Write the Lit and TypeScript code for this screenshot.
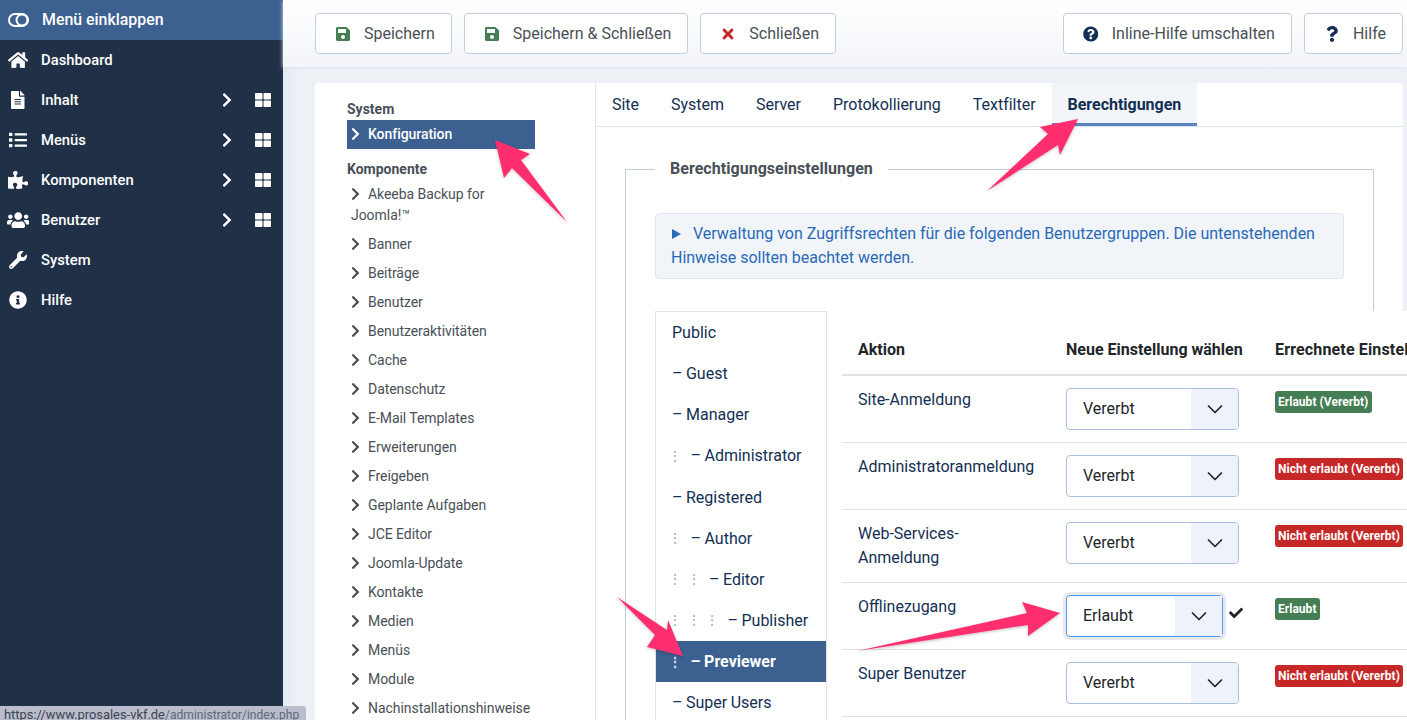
import { LitElement, html, css, svg } from "lit";
import { customElement } from "lit/decorators.js";

const P: Record<string, [number, string]> = {
  chevron: [320, "M285.476 272.971L91.132 467.314c-9.373 9.373-24.569 9.373-33.941 0l-22.667-22.667c-9.357-9.357-9.375-24.522-.04-33.901L188.505 256 34.484 101.255c-9.335-9.379-9.317-24.544.04-33.901l22.667-22.667c9.373-9.373 24.569-9.373 33.941 0L285.475 239.03c9.373 9.372 9.373 24.568.001 33.941z"],
  check: [512, "M173.898 439.404l-166.4-166.4c-9.997-9.997-9.997-26.206 0-36.204l36.203-36.204c9.997-9.998 26.207-9.998 36.204 0L192 312.69 432.095 72.596c9.997-9.997 26.207-9.997 36.204 0l36.203 36.204c9.997 9.997 9.997 26.206 0 36.204l-294.4 294.401c-9.998 9.997-26.207 9.997-36.204-.001z"],
  times: [352, "M242.72 256l100.07-100.07c12.28-12.28 12.28-32.19 0-44.48l-22.24-22.24c-12.28-12.28-32.19-12.28-44.48 0L176 189.28 75.93 89.21c-12.28-12.28-32.19-12.28-44.48 0L9.21 111.45c-12.28 12.28-12.28 32.19 0 44.48L109.28 256 9.21 356.07c-12.28 12.28-12.28 32.19 0 44.48l22.24 22.24c12.28 12.28 32.2 12.28 44.48 0L176 322.72l100.07 100.07c12.28 12.28 32.2 12.28 44.48 0l22.24-22.24c12.28-12.28 12.28-32.19 0-44.48L242.72 256z"],
  save: [448, "M433.941 129.941l-83.882-83.882A48 48 0 0 0 316.118 32H48C21.49 32 0 53.49 0 80v352c0 26.51 21.49 48 48 48h352c26.51 0 48-21.49 48-48V163.882a48 48 0 0 0-14.059-33.941zM224 416c-35.346 0-64-28.654-64-64 0-35.346 28.654-64 64-64s64 28.654 64 64c0 35.346-28.654 64-64 64zm96-304.52V212c0 6.627-5.373 12-12 12H76c-6.627 0-12-5.373-12-12V108c0-6.627 5.373-12 12-12h228.52c3.183 0 6.235 1.264 8.485 3.515l3.48 3.48A11.996 11.996 0 0 1 320 111.48z"],
  qcircle: [512, "M504 256c0 136.997-111.043 248-248 248S8 392.997 8 256C8 119.083 119.043 8 256 8s248 111.083 248 248zM262.655 90c-54.497 0-89.255 22.957-116.549 63.758-3.536 5.286-2.353 12.415 2.715 16.258l34.699 26.31c5.205 3.947 12.621 3.008 16.665-2.122 17.864-22.658 30.113-35.797 57.303-35.797 20.429 0 45.698 13.148 45.698 32.958 0 14.976-12.363 22.667-32.534 33.976C247.128 238.528 216 254.941 216 296v4c0 6.627 5.373 12 12 12h56c6.627 0 12-5.373 12-12v-1.333c0-28.462 83.186-29.647 83.186-106.667 0-58.002-60.165-102-116.531-102zM256 338c-25.365 0-46 20.635-46 46 0 25.364 20.635 46 46 46s46-20.636 46-46c0-25.365-20.635-46-46-46z"],
  question: [384, "M202.021 0C122.202 0 70.503 32.703 29.914 91.026c-7.363 10.58-5.093 25.086 5.178 32.874l43.138 32.709c10.373 7.865 25.132 6.026 33.253-4.148 25.049-31.381 43.63-49.449 82.757-49.449 30.764 0 68.816 19.799 68.816 49.631 0 22.552-18.617 34.134-48.993 51.164-35.423 19.86-82.299 44.576-82.299 106.405V320c0 13.255 10.745 24 24 24h72.471c13.255 0 24-10.745 24-24v-5.773c0-42.86 125.268-44.645 125.268-160.627C377.504 66.256 286.902 0 202.021 0zM192 373.459c-38.196 0-69.271 31.075-69.271 69.271 0 38.195 31.075 69.27 69.271 69.27s69.271-31.075 69.271-69.271-31.075-69.27-69.271-69.27z"],
  info: [512, "M256 8C119.043 8 8 119.083 8 256c0 136.997 111.043 248 248 248s248-111.003 248-248C504 119.083 392.957 8 256 8zm0 110c23.196 0 42 18.804 42 42s-18.804 42-42 42-42-18.804-42-42 18.804-42 42-42zm56 254c0 6.627-5.373 12-12 12h-88c-6.627 0-12-5.373-12-12v-24c0-6.627 5.373-12 12-12h12v-64h-12c-6.627 0-12-5.373-12-12v-24c0-6.627 5.373-12 12-12h64c6.627 0 12 5.373 12 12v100h12c6.627 0 12 5.373 12 12v24z"],
  wrench: [512, "M507.73 109.1c-2.24-9.03-13.54-12.09-20.12-5.51l-74.36 74.36-67.88-11.31-11.31-67.88 74.36-74.36c6.62-6.62 3.43-17.9-5.66-20.16-47.38-11.74-99.55.91-136.58 37.93-39.64 39.64-50.55 97.1-34.05 147.2L18.74 402.76c-24.99 24.99-24.99 65.51 0 90.5 24.99 24.99 65.51 24.99 90.5 0l213.21-213.21c50.12 16.71 107.47 5.68 147.37-34.22 37.07-37.07 49.7-89.32 37.91-136.73zM64 472c-13.25 0-24-10.75-24-24 0-13.26 10.75-24 24-24s24 10.74 24 24c0 13.25-10.75 24-24 24z"],
  list: [512, "M80 368H16a16 16 0 0 0-16 16v64a16 16 0 0 0 16 16h64a16 16 0 0 0 16-16v-64a16 16 0 0 0-16-16zm0-320H16A16 16 0 0 0 0 64v64a16 16 0 0 0 16 16h64a16 16 0 0 0 16-16V64a16 16 0 0 0-16-16zm0 160H16a16 16 0 0 0-16 16v64a16 16 0 0 0 16 16h64a16 16 0 0 0 16-16v-64a16 16 0 0 0-16-16zm416 176H176a16 16 0 0 0-16 16v32a16 16 0 0 0 16 16h320a16 16 0 0 0 16-16v-32a16 16 0 0 0-16-16zm0-320H176a16 16 0 0 0-16 16v32a16 16 0 0 0 16 16h320a16 16 0 0 0 16-16V80a16 16 0 0 0-16-16zm0 160H176a16 16 0 0 0-16 16v32a16 16 0 0 0 16 16h320a16 16 0 0 0 16-16v-32a16 16 0 0 0-16-16z"],
  grid: [512, "M296 32h192c13.255 0 24 10.745 24 24v160c0 13.255-10.745 24-24 24H296c-13.255 0-24-10.745-24-24V56c0-13.255 10.745-24 24-24zm-80 0H24C10.745 32 0 42.745 0 56v160c0 13.255 10.745 24 24 24h192c13.255 0 24-10.745 24-24V56c0-13.255-10.745-24-24-24zM0 296v160c0 13.255 10.745 24 24 24h192c13.255 0 24-10.745 24-24V296c0-13.255-10.745-24-24-24H24c-13.255 0-24 10.745-24 24zm296 184h192c13.255 0 24-10.745 24-24V296c0-13.255-10.745-24-24-24H296c-13.255 0-24 10.745-24 24v160c0 13.255 10.745 24 24 24z"],
  home: [576, "M280.37 148.26L96 300.11V464a16 16 0 0 0 16 16l112.06-.29a16 16 0 0 0 15.92-16V368a16 16 0 0 1 16-16h64a16 16 0 0 1 16 16v95.64a16 16 0 0 0 16 16.05L464 480a16 16 0 0 0 16-16V300L295.67 148.26a12.19 12.19 0 0 0-15.3 0zM571.6 251.47L488 182.56V44.05a12 12 0 0 0-12-12h-56a12 12 0 0 0-12 12v72.61L318.47 43a48 48 0 0 0-61 0L4.34 251.47a12 12 0 0 0-1.6 16.9l25.5 31A12 12 0 0 0 45.15 301l235.22-193.74a12.19 12.19 0 0 1 15.3 0L530.9 301a12 12 0 0 0 16.9-1.6l25.5-31a12 12 0 0 0-1.7-16.93z"],
  file: [384, "M224 136V0H24C10.7 0 0 10.7 0 24v464c0 13.3 10.7 24 24 24h336c13.3 0 24-10.7 24-24V160H248c-13.2 0-24-10.8-24-24zm64 236c0 6.6-5.4 12-12 12H108c-6.6 0-12-5.4-12-12v-8c0-6.6 5.4-12 12-12h168c6.6 0 12 5.4 12 12v8zm0-64c0 6.6-5.4 12-12 12H108c-6.6 0-12-5.4-12-12v-8c0-6.6 5.4-12 12-12h168c6.6 0 12 5.4 12 12v8zm0-72v8c0 6.6-5.4 12-12 12H108c-6.6 0-12-5.4-12-12v-8c0-6.6 5.4-12 12-12h168c6.6 0 12 5.4 12 12zm96-114.1v6.1H256V0h6.1c6.4 0 12.5 2.5 17 7l97.9 98c4.5 4.5 7 10.6 7 16.9z"],
  puzzle: [576, "M519.442 288.651c-41.519 0-59.5 31.593-82.058 31.593C377.409 320.244 432 144 432 144s-196.288 80-196.288-3.297c0-35.827 36.288-46.25 36.288-85.985C272 19.216 243.885 0 210.539 0c-34.654 0-66.366 18.891-66.366 56.346 0 41.364 31.711 59.277 31.711 81.75C175.885 207.719 0 166.758 0 166.758v333.237s178.635 41.047 178.635-28.662c0-22.473-40-40.107-40-81.471 0-37.456 29.25-56.346 63.577-56.346 33.673 0 61.788 19.216 61.788 54.717 0 39.735-36.288 50.158-36.288 85.985 0 60.803 129.675 25.73 181.23 25.73 0 0-34.725-120.101 25.827-120.101 35.962 0 46.423 36.152 86.308 36.152C556.712 416 576 387.99 576 354.443c0-34.199-18.962-65.792-56.558-65.792z"],
  users: [640, "M96 224c35.3 0 64-28.7 64-64s-28.7-64-64-64-64 28.7-64 64 28.7 64 64 64zm448 0c35.3 0 64-28.7 64-64s-28.7-64-64-64-64 28.7-64 64 28.7 64 64 64zm32 32h-64c-17.6 0-33.5 7.1-45.1 18.6 40.3 22.1 68.9 62 75.1 109.4h66c17.7 0 32-14.3 32-32v-32c0-35.3-28.7-64-64-64zm-256 0c61.9 0 112-50.1 112-112S381.9 32 320 32 208 82.1 208 144s50.1 112 112 112zm76.8 32h-8.3c-20.8 10-43.9 16-68.5 16s-47.6-6-68.5-16h-8.3C179.6 288 128 339.6 128 403.2V432c0 26.5 21.5 48 48 48h288c26.5 0 48-21.5 48-48v-28.8c0-63.6-51.6-115.2-115.2-115.2zm-223.7-13.4C161.5 263.1 145.6 256 128 256H64c-35.3 0-64 28.7-64 64v32c0 17.7 14.3 32 32 32h65.9c6.3-47.4 34.9-87.3 75.2-109.4z"],
};

const icon = (name: string, cls = "") => {
  const [w, d] = P[name];
  return html`<svg class="ic ${cls}" viewBox="0 0 ${w} 512" fill="currentColor"><path d=${d}></path></svg>`;
};

const NAV: [string, string, boolean][] = [
  ["Dashboard", "home", false],
  ["Inhalt", "file", true],
  ["Menüs", "list", true],
  ["Komponenten", "puzzle", true],
  ["Benutzer", "users", true],
  ["System", "wrench", false],
  ["Hilfe", "info", false],
];

const TREE = ["Banner", "Beiträge", "Benutzer", "Benutzeraktivitäten", "Cache", "Datenschutz", "E-Mail Templates", "Erweiterungen", "Freigeben", "Geplante Aufgaben", "JCE Editor", "Joomla-Update", "Kontakte", "Medien", "Menüs", "Module", "Nachinstallationshinweise"];

const TABS = ["Site", "System", "Server", "Protokollierung", "Textfilter", "Berechtigungen"];

const GROUPS: [string, number][] = [
  ["Public", -1], ["Guest", 0], ["Manager", 0], ["Administrator", 1], ["Registered", 0],
  ["Author", 1], ["Editor", 2], ["Publisher", 3], ["Previewer", 1], ["Super Users", 0],
];

const ROWS: [string, string, string, boolean][] = [
  ["Site-Anmeldung", "Vererbt", "Erlaubt (Vererbt)", true],
  ["Administratoranmeldung", "Vererbt", "Nicht erlaubt (Vererbt)", false],
  ["Web-Services-Anmeldung", "Vererbt", "Nicht erlaubt (Vererbt)", false],
  ["Offlinezugang", "Erlaubt", "Erlaubt", true],
  ["Super Benutzer", "Vererbt", "Nicht erlaubt (Vererbt)", false],
];

const ARROWS = [
  "495,140 530,154 521,160 567,222 512,168 504,178",
  "1078,119 1060,155 1058,145 987,191 1048,134 1040,127",
  "683,656 647,647 655,635 617,597 667,630 668,620",
  "1060,613 1028,636 1028,625 857,651 1027,613 1022,602",
];

@customElement("app-root")
export class AppRoot extends LitElement {
  static styles = css`
    :host { display: flex; width: 1407px; height: 720px; overflow: hidden; position: relative; font-family: Roboto, "Liberation Sans", sans-serif; background: #edf1f6; }
    * { box-sizing: border-box; }
    .ic { display: block; flex: none; height: 16px; }

    .side { width: 283px; flex: none; background: #203047; color: #fff; font-size: 14.8px; font-weight: 500; }
    .collapse { height: 40px; background: #3c6090; display: flex; align-items: center; padding-left: 8px; gap: 13px; font-size: 15.9px; }
    .collapse span { padding-bottom: 2px; }
    .nav { height: 40px; display: flex; align-items: center; }
    .nav .lead { width: 41px; display: flex; justify-content: center; padding-right: 5px; flex: none; }
    .nav .lead .ic { height: 18px; }
    .nav .lbl { flex: 1; }
    .nav .chev { height: 16px; margin-right: 23px; }
    .nav .gr { height: 16px; margin-right: 12px; }

    .main { flex: 1; min-width: 0; display: flex; flex-direction: column; box-shadow: inset 14px 0 14px -10px #dde5f2; }
    .bar { height: 67px; flex: none; display: flex; align-items: center; padding: 0 4px 0 32px; gap: 12px; background: linear-gradient(180deg, #fff, #f2f5f9); box-shadow: 0 1px 4px #dfe5ee; }
    .btn { height: 41px; display: flex; align-items: center; padding: 0 16px 0 20px; gap: 14px; background: #fff; border: 1px solid #c3cddd; border-radius: 4px; font-size: 16px; color: #495057; white-space: nowrap; }
    .btn .ic { width: 14px; }
    .btn.q { padding-left: 19px; gap: 13.5px; }
    .btn.q .ic { width: 15.5px; height: 16px; }
    .g { color: #457d54; } .r { color: #c52827; } .n { color: #132f53; }
    .spacer { flex: 1; }

    .content { flex: 1; min-height: 0; padding: 16px 4px 0 32px; display: flex; }
    .card { flex: 1; min-width: 0; background: #fff; border-radius: 4px 4px 0 0; display: flex; }

    .tree { width: 281px; flex: none; border-right: 1px solid #dfe3ee; padding: 15px 60px 0 32px; color: #495057; font-size: 14px; }
    .tree h4 { margin: 0; font-size: 14px; font-weight: 700; color: #495057; line-height: 22px; }
    .tree h4.k { margin-top: 9px; }
    .item { padding: 3.5px 0 4px 4px; line-height: 21.5px; letter-spacing: -.05px; }
    .item.two { margin-bottom: -.5px; }
    .item .ic { display: inline-block; height: 14px; vertical-align: -2px; margin-right: 8px; width: 9px; }
    .item.on { background: #3c6090; color: #fff; font-weight: 500; }

    .pane { flex: 1; min-width: 0; }
    .tabs { height: 44px; display: flex; border-bottom: 1px solid #dfe3ee; color: #132f53; font-size: 16px; letter-spacing: -.02px; }
    .tab { padding: 0 16px; line-height: 43px; height: 43px; }
    .tab.on { background: #f2f5f9; font-weight: 700; border-bottom: 3px solid #5a83c0; }

    .body { padding: 30px 29px 0 29px; }
    fieldset { margin: 0; padding: 0 0 0 29px; border: 1px solid #c3cddd; border-bottom: 0; min-width: 0; height: 600px; }
    legend { padding: 0 15px; font-size: 16px; font-weight: 700; color: #495057; line-height: 24px; letter-spacing: .04px; }
    .alert { width: 689px; height: 66px; margin-top: 32px; padding: 8px 15px; background: #f1f5f9; border: 1px solid #dfe6ee; border-radius: 4px; color: #2a69b8; font-size: 16px; line-height: 24px; letter-spacing: -.01px; }
    .alert i { display: inline-block; width: 0; height: 0; border-left: 9px solid #2a69b8; border-top: 5px solid transparent; border-bottom: 5px solid transparent; margin: 0 12px 0 1px; }

    .perm { display: flex; margin-top: 32px; align-items: flex-start; width: 760px; }
    .groups { width: 172px; flex: none; border: 1px solid #dfe3ee; border-bottom: 0; color: #132f53; font-size: 16px; background: #fff; }
    .grp { height: 41.13px; display: flex; align-items: center; padding-left: 16px; white-space: nowrap; word-spacing: -.5px; }
    .grp .dot { width: 18.5px; flex: none; color: #a5abb3; font-size: 14px; text-indent: -4px; }
    .grp.on { background: #3c6090; color: #fff; font-weight: 700; }
    .grp.on .dot { color: #d5dce6; }

    .tablewrap { margin-left: 15px; width: 620px; height: 420px; flex: none; background: #fff; }
    table { width: 620px; table-layout: fixed; border-collapse: separate; border-spacing: 0; font-size: 16px; line-height: 24px; color: #132f53; }
    th { height: 65px; vertical-align: bottom; text-align: left; padding: 0 16px 12px; color: #212529; font-weight: 700; border-bottom: 2px solid #dee2e6; white-space: nowrap; }
    th:nth-child(3) { letter-spacing: .15px; }
    td { vertical-align: top; padding: 12px 16px; border-bottom: 1px solid #dee2e6; }
    .pick { display: flex; align-items: center; gap: 6px; }
    .sel { width: 173px; height: 42px; display: flex; align-items: center; border: 1px solid #a9c0e0; border-radius: 4px; overflow: hidden; color: #212529; background: #fff; }
    .sel span { flex: 1; padding-left: 16px; }
    .sel b { width: 47px; height: 100%; background: #eef3fb; display: flex; align-items: center; justify-content: center; }
    .sel.focus { width: 157px; border-color: #4d9bf5; box-shadow: 0 0 0 3px #e9e9e9; overflow: visible; }
    .pick .tick { height: 14px; width: 14px; color: #212529; margin-top: -6px; }
    .badge { display: inline-block; margin-top: 3px; padding: 0 3.5px 0 3px; height: 22px; line-height: 22px; border-radius: 3px; color: #fff; font-size: 12px; font-weight: 700; white-space: nowrap; letter-spacing: .03px; }
    .badge.ok { background: #457d54; } .badge.no { background: #c52827; }

    .status { position: absolute; left: 0; bottom: 0; width: 306px; height: 14px; background: #b9bdcc; border-radius: 0 3px 0 0; font-size: 12.9px; line-height: 17px; padding-left: 4px; color: #3c4350; white-space: nowrap; overflow: hidden; }
    .status em { font-style: normal; font-size: 12.1px; color: #5f6778; }

    .arrows { position: absolute; left: 0; top: 0; width: 1407px; height: 720px; pointer-events: none; }
  `;

  render() {
    return html`
      <aside class="side">
        <div class="collapse">
          <svg width="21" height="14" viewBox="0 0 21 14" fill="none" stroke="#fff" stroke-width="2"><rect x="1" y="1" width="19" height="12" rx="6"></rect><circle cx="14" cy="7" r="5.5"></circle></svg>
          <span>Menü einklappen</span>
        </div>
        ${NAV.map(([t, i, sub]) => html`
          <div class="nav">
            <span class="lead">${icon(i)}</span>
            <span class="lbl">${t}</span>
            ${sub ? html`${icon("chevron", "chev")}${icon("grid", "gr")}` : ""}
          </div>`)}
      </aside>
      <div class="main">
        <div class="bar">
          <div class="btn">${icon("save", "g")}Speichern</div>
          <div class="btn">${icon("save", "g")}Speichern &amp; Schließen</div>
          <div class="btn">${icon("times", "r")}Schließen</div>
          <div class="spacer"></div>
          <div class="btn q">${icon("qcircle", "n")}Inline-Hilfe umschalten</div>
          <div class="btn">${icon("question", "n")}Hilfe</div>
        </div>
        <div class="content">
          <div class="card">
            <nav class="tree">
              <h4>System</h4>
              <div class="item on">${icon("chevron")}Konfiguration</div>
              <h4 class="k">Komponente</h4>
              <div class="item two">${icon("chevron")}Akeeba Backup for Joomla!™</div>
              ${TREE.map((t) => html`<div class="item">${icon("chevron")}${t}</div>`)}
            </nav>
            <section class="pane">
              <div class="tabs">
                ${TABS.map((t, i) => html`<div class="tab ${i === 5 ? "on" : ""}">${t}</div>`)}
              </div>
              <div class="body">
                <fieldset>
                  <legend>Berechtigungseinstellungen</legend>
                  <div class="alert"><i></i>Verwaltung von Zugriffsrechten für die folgenden Benutzergruppen. Die untenstehenden Hinweise sollten beachtet werden.</div>
                  <div class="perm">
                    <div class="groups">
                      ${GROUPS.map(([t, lvl]) => html`
                        <div class="grp ${t === "Previewer" ? "on" : ""}">
                          ${Array.from({ length: Math.max(lvl, 0) }, () => html`<span class="dot">⋮</span>`)}
                          <span>${lvl >= 0 ? "– " : ""}${t}</span>
                        </div>`)}
                    </div>
                    <div class="tablewrap">
                      <table>
                        <colgroup><col style="width:208px" /><col style="width:209px" /><col style="width:203px" /></colgroup>
                        <thead><tr><th>Aktion</th><th>Neue Einstellung wählen</th><th>Errechnete Einstellung</th></tr></thead>
                        <tbody>
                          ${ROWS.map(([a, v, b, ok]) => html`
                            <tr>
                              <td>${a}</td>
                              <td><div class="pick">
                                <div class="sel ${v === "Erlaubt" ? "focus" : ""}"><span>${v}</span><b><svg width="16" height="16" viewBox="0 0 16 16" fill="none" stroke="#212529" stroke-width="1.7" stroke-linecap="round" stroke-linejoin="round"><path d="M1.5 5l6.5 6.5L14.5 5"></path></svg></b></div>
                                ${v === "Erlaubt" ? icon("check", "tick") : ""}
                              </div></td>
                              <td><span class="badge ${ok ? "ok" : "no"}">${b}</span></td>
                            </tr>`)}
                        </tbody>
                      </table>
                    </div>
                  </div>
                </fieldset>
              </div>
            </section>
          </div>
        </div>
      </div>
      <svg class="arrows" viewBox="0 0 1407 720">
        <defs><filter id="sh" x="-20%" y="-20%" width="140%" height="140%"><feDropShadow dx="0" dy="1" stdDeviation="1.5" flood-color="#000" flood-opacity=".25"></feDropShadow></filter></defs>
        ${ARROWS.map((p) => svg`<polygon points=${p} fill="#ff2e6e" filter="url(#sh)"></polygon>`)}
      </svg>
      <div class="status">https://www.prosales-vkf.de<em>/administrator/index.php</em></div>
    `;
  }
}
